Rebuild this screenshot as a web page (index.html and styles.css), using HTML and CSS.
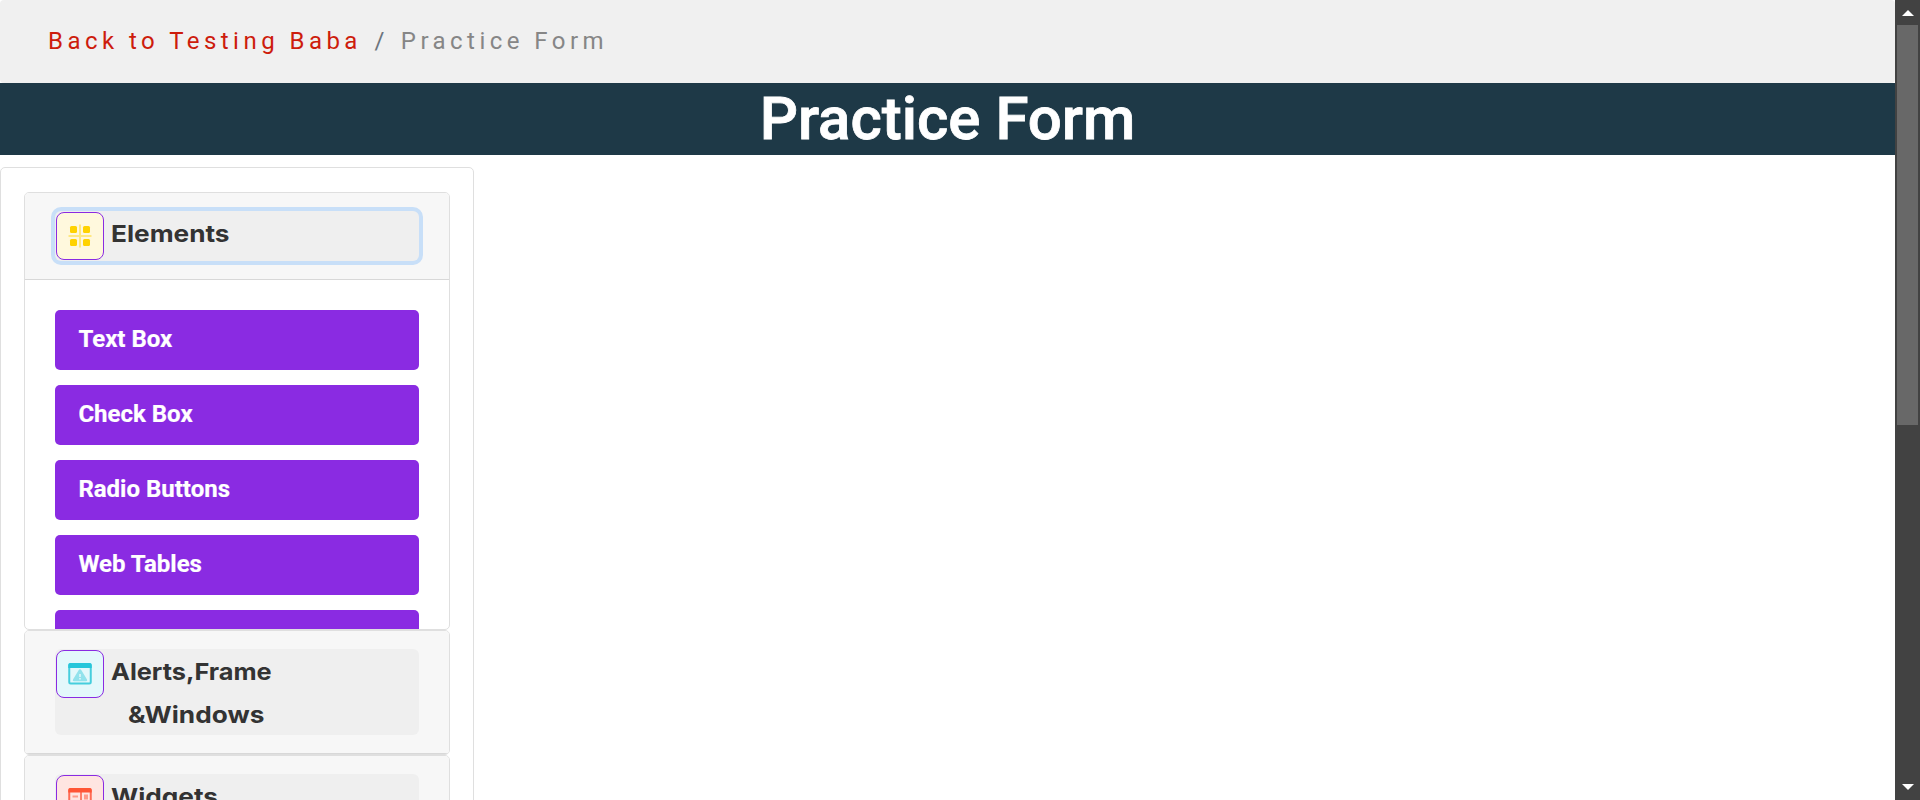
FILE: index.html
```
<!DOCTYPE html>
<html lang="en">
<head>
<meta charset="utf-8">
<title>Practice Form</title>
<link rel="stylesheet" href="styles.css">
</head>
<body>
<div class="window">
  <main class="page">
    <nav class="breadcrumb"><a class="crumb-link" href="#">Back to Testing Baba</a><span class="slash">/</span><span class="crumb-current">Practice Form</span></nav>
    <h1 class="title">Practice Form</h1>
    <aside class="sidebar">
      <section class="card">
        <div class="card-header">
          <button class="toggle focused">
            <span class="icon yellow"><svg width="24" height="24" viewBox="0 0 24 24"><g fill="#ffd200"><rect x="2" y="2" width="7" height="7" rx="1.5"/><rect x="15" y="2" width="7" height="7" rx="1.5"/><rect x="2" y="15" width="7" height="7" rx="1.5"/><rect x="15" y="15" width="7" height="7" rx="1.5"/></g><path d="M12 .5v23M.5 12h23" stroke="#ffe880" stroke-width="2"/></svg></span>
            <span class="label"><span class="t-elements">Elements</span></span>
          </button>
        </div>
        <div class="card-body">
          <a class="item" href="#">Text Box</a>
          <a class="item" href="#">Check Box</a>
          <a class="item" href="#">Radio Buttons</a>
          <a class="item" href="#">Web Tables</a>
          <a class="item" href="#"></a>
        </div>
      </section>
      <section class="card">
        <div class="card-header">
          <button class="toggle">
            <span class="icon cyan"><svg width="24" height="24" viewBox="0 0 24 24"><rect x="1.25" y="2" width="21.5" height="19.5" rx="1.5" fill="none" stroke="#45cedd" stroke-width="2"/><path d="M.3 6V3Q.3 1 2.3 1h19.4q2 0 2 2v3z" fill="#26c6da"/><path d="M12 7.3q.9 0 1.4.9l5.6 9.2q.8 1.8-.9 1.8H5.9q-1.700 0-.9-1.800l5.600-9.200q.500-.900 1.400-.900z" fill="#92e2ec"/><path d="M12 12v3M12 16v1.500" stroke="#e3f8fb" stroke-width="1.500"/></svg></span>
            <span class="label"><span class="t-alerts">Alerts,Frame</span><br><span class="t-windows">&amp;Windows</span></span>
          </button>
        </div>
      </section>
      <section class="card">
        <div class="card-header">
          <button class="toggle">
            <span class="icon red"><svg width="24" height="24" viewBox="0 0 24 24"><rect x="1.25" y="2" width="21.5" height="19.5" rx="1.5" fill="none" stroke="#ff6b54" stroke-width="2"/><path d="M.3 5.5V3Q.3 1 2.3 1h19.4q2 0 2 2v2.5z" fill="#ff5535"/><path d="M13 5v16" stroke="#ff5b40" stroke-width="1.5"/><path d="M4.5 9.5h5.5" stroke="#ff9a89" stroke-width="2"/><rect x="16" y="7.5" width="4" height="5" fill="#ff9a89"/></svg></span>
            <span class="label"><span class="t-widgets">Widgets</span></span>
          </button>
        </div>
      </section>
    </aside>
  </main>
  <div class="scrollbar">
    <svg class="arrow" width="12" height="6" viewBox="0 0 12 6"><path d="M6 0l6 6H0z" fill="#fff"/></svg>
    <div class="thumb"></div>
    <svg class="arrow" width="12" height="6" viewBox="0 0 12 6"><path d="M0 0h12L6 6z" fill="#fff"/></svg>
  </div>
</div>
</body>
</html>
```
FILE: styles.css
```
* { box-sizing: border-box; }
body { margin: 0; background: #fff; font-family: Roboto, sans-serif; font-size: 24px; overflow: hidden; }
a { text-decoration: none; }
.window { display: flex; height: 800px; overflow: hidden; }
.page { flex: 1; min-width: 0; overflow: hidden; }
.breadcrumb { height: 83px; display: flex; align-items: center; padding: 0 48px 2px; background: #f0f0f0; border-radius: 4px; letter-spacing: 4.46px; white-space: pre; }
.crumb-link { color: #cd1c0c; }
.slash { color: #6c757d; padding: 0 12px 0 12.600px; }
.crumb-current { color: #868686; }
.title { margin: 0 0 12px; height: 72px; line-height: 72px; background: #1e3947; color: #fff; font-size: 60px; font-weight: 500; text-align: center; -webkit-text-stroke: 0.8px #fff; }
.sidebar { width: 474px; height: 900px; border: 1px solid #dfdfdf; border-radius: 5px; padding: 24px 23px; background: #fff; }
.card { width: 426px; border: 1px solid #dfdfdf; border-radius: 5px; background: #fff; overflow: hidden; }
.card-header { padding: 18px 30px; background: #f7f7f7; border-bottom: 1px solid #d8d8d8; }
.card-body { height: 349px; overflow: hidden; padding: 30px; display: flex; flex-direction: column; gap: 15px; }
.item { flex: 0 0 60px; line-height: 59px; padding: 0 23.4px; border-radius: 5px; background: #8a2be2; color: #fff; font-weight: 700; -webkit-text-stroke: 0.2px #fff; }
.toggle { display: flex; align-items: flex-start; gap: 6.5px; width: 364px; min-height: 50px; padding: 1px; border: 0; border-radius: 6px; background: #efefef; color: #333; text-align: left; font: 700 23.5px Inter, sans-serif; }
.focused { box-shadow: 0 0 0 4px #c8dff8; }
.icon { flex: none; width: 48px; height: 48px; display: flex; align-items: center; justify-content: center; border: 1px solid #8a2be2; border-radius: 8px; }
.yellow { background: #fff8dd; }
.cyan { background: #e3f8fb; }
.red { background: #ffe5e1; }
.label { display: block; line-height: 43px; margin-bottom: -2px; }
.label span { display: inline-block; vertical-align: top; transform-origin: left center; }
.t-elements, .t-widgets { transform: scaleX(1.115); }
.t-alerts { transform: scaleX(1.078); }
.t-windows { margin-left: 17px; transform: scaleX(1.115); }
.scrollbar { width: 25px; background: #424242; display: flex; flex-direction: column; align-items: center; padding: 10px 0; }
.arrow { flex: none; display: block; }
.thumb { width: 21px; height: 400px; margin: 9px 0 auto; background: #686868; }
```
